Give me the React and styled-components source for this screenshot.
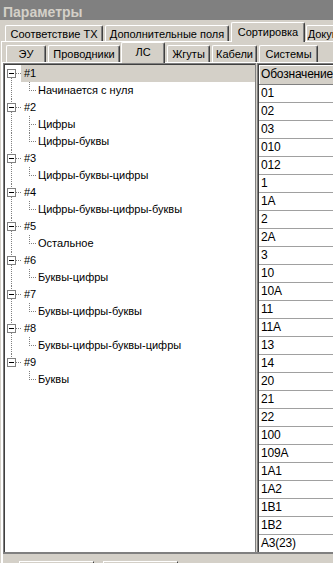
import React from 'react';
import styled, { createGlobalStyle } from 'styled-components';

const GlobalStyle = createGlobalStyle`
  html, body { margin: 0; padding: 0; background: #d4d0c8; }
  body { font-family: "Liberation Sans", Arial, sans-serif; font-size: 11px; color: #000; }
  #root { width: 333px; height: 563px; overflow: hidden; }
`;

const Window = styled.div`
  width: 333px;
  height: 563px;
  overflow: hidden;
  background: #d4d0c8;
  display: flex;
  flex-direction: column;
`;

const TitleBar = styled.div`
  flex: none;
  height: 20px;
  background: #808080;
  color: #d4d0c8;
  font-weight: bold;
  font-size: 14px;
  line-height: 24px;
  padding-left: 3px;
  white-space: nowrap;
  overflow: hidden;
`;

const TabRow = styled.div`
  flex: none;
  height: ${p => p.$h}px;
  display: flex;
  align-items: flex-end;
  padding-left: ${p => p.$pl}px;
  position: relative;
  z-index: 2;
`;

const Tab = styled.div`
  flex: none;
  box-sizing: border-box;
  width: ${p => p.$w}px;
  margin-left: ${p => p.$ml}px;
  height: ${p => (p.$active ? p.$ah : p.$h)}px;
  margin-bottom: ${p => (p.$active ? -1 : 0)}px;
  padding-bottom: ${p => (p.$active ? 2 : 0)}px;
  background: #d4d0c8;
  border-top: 1px solid #fff;
  border-left: 1px solid #fff;
  border-right: 1px solid #404040;
  border-radius: 2px 2px 0 0;
  box-shadow: inset -1px 0 0 #808080;
  display: flex;
  align-items: center;
  justify-content: center;
  white-space: nowrap;
  overflow: hidden;
  font-size: 11px;
`;

const OuterPage = styled.div`
  flex: 1;
  min-height: 0;
  margin-left: 1px;
  border-top: 1px solid #fff;
  border-left: 1px solid #fff;
  display: flex;
  flex-direction: column;
`;

const InnerPage = styled.div`
  flex: 1;
  min-height: 0;
  border-top: 1px solid #fff;
  border-left: 1px solid #fff;
  display: flex;
  flex-direction: column;
`;

const Panels = styled.div`
  flex: none;
  height: 489px;
  display: flex;
`;

const Tree = styled.div`
  flex: none;
  box-sizing: border-box;
  width: 253px;
  background: #fff;
  border-top: 1px solid #808080;
  border-left: 1px solid #808080;
  border-right: 1px solid #808080;
  padding: 1px 0 0 1px;
  box-shadow: inset 1px 1px 0 #404040;
  display: flex;
  flex-direction: column;
  overflow: hidden;
`;

const TreeRow = styled.div`
  flex: none;
  height: 17px;
  display: flex;
  align-items: stretch;
`;

const Guide = styled.svg`
  flex: none;
  display: block;
`;

const NodeLabel = styled.div`
  flex: 1;
  padding-left: ${p => p.$pl}px;
  line-height: 17px;
  font-size: 11px;
  white-space: nowrap;
  background: ${p => (p.$selected ? '#d4d0c8' : 'transparent')};
`;

const Grid = styled.div`
  flex: 1;
  min-width: 0;
  margin-left: 1px;
  background: #fff;
  border-top: 1px solid #808080;
  border-left: 1px solid #808080;
  padding: 1px 0 0 1px;
  box-shadow: inset 1px 1px 0 #404040;
  display: flex;
  flex-direction: column;
  overflow: hidden;
`;

const HeaderCell = styled.div`
  flex: none;
  box-sizing: border-box;
  height: 20px;
  background: #d4d0c8;
  border-bottom: 1px solid #808080;
  box-shadow: inset 1px 1px 0 #fff;
  padding-left: 2px;
  line-height: 19px;
  font-size: 12px;
  letter-spacing: -0.2px;
  white-space: nowrap;
`;

const Cell = styled.div`
  flex: none;
  box-sizing: border-box;
  height: 18px;
  border-bottom: 1px solid #a0a0a0;
  padding-left: 2px;
  line-height: 17px;
  font-size: 12px;
  letter-spacing: -0.2px;
  white-space: nowrap;
`;

const BottomEdge = styled.div`
  flex: none;
  height: 2px;
  background: #808080;
`;

const BottomBar = styled.div`
  flex: 1;
  display: flex;
  gap: 9px;
  padding: 7px 0 0 16px;
`;

const StubButton = styled.div`
  flex: none;
  box-sizing: border-box;
  width: 75px;
  height: 12px;
  border-top: 1px solid #fff;
  border-left: 1px solid #fff;
  border-right: 1px solid #404040;
`;

const outerTabs = [
  { label: 'Соответствие ТХ', w: 98, ml: 0 },
  { label: 'Дополнительные поля', w: 124, ml: 2 },
  { label: 'Сортировка', w: 74, ml: 2, active: true },
  { label: 'Документы', w: 60, ml: 1 },
];

const innerTabs = [
  { label: 'ЭУ', w: 40, ml: 0 },
  { label: 'Проводники', w: 72, ml: 2 },
  { label: 'ЛС', w: 44, ml: 1, active: true },
  { label: 'Жгуты', w: 43, ml: 2 },
  { label: 'Кабели', w: 45, ml: 2 },
  { label: 'Системы', w: 59, ml: 2 },
];

const tree = [
  { label: '#1', children: ['Начинается с нуля'] },
  { label: '#2', children: ['Цифры', 'Цифры-буквы'] },
  { label: '#3', children: ['Цифры-буквы-цифры'] },
  { label: '#4', children: ['Цифры-буквы-цифры-буквы'] },
  { label: '#5', children: ['Остальное'] },
  { label: '#6', children: ['Буквы-цифры'] },
  { label: '#7', children: ['Буквы-цифры-буквы'] },
  { label: '#8', children: ['Буквы-цифры-буквы-цифры'] },
  { label: '#9', children: ['Буквы'] },
];

const gridRows = [
  '01', '02', '03', '010', '012', '1', '1A', '2', '2A', '3', '10', '10A', '11',
  '11A', '13', '14', '20', '21', '22', '100', '109A', '1A1', '1A2', '1B1', '1B2', 'A3(23)',
];

const dot = {
  stroke: '#808080',
  strokeWidth: 1,
  strokeDasharray: '1 1',
  shapeRendering: 'crispEdges',
};

function ParentGuide({ first, last }) {
  return (
    <Guide width={16} height={17} viewBox="0 0 16 17">
      {!first && <line x1={6.5} y1={0} x2={6.5} y2={4} {...dot} />}
      {!last && <line x1={6.5} y1={13} x2={6.5} y2={17} {...dot} />}
      <line x1={11} y1={8.5} x2={16} y2={8.5} {...dot} />
      <rect x={2.5} y={4.5} width={8} height={8} fill="#fff" stroke="#808080" shapeRendering="crispEdges" />
      <line x1={4} y1={8.5} x2={9} y2={8.5} stroke="#000" shapeRendering="crispEdges" />
    </Guide>
  );
}

function ChildGuide({ parentLast, lastChild }) {
  return (
    <Guide width={31} height={17} viewBox="0 0 31 17">
      {!parentLast && <line x1={6.5} y1={0} x2={6.5} y2={17} {...dot} />}
      <line x1={24.5} y1={0} x2={24.5} y2={lastChild ? 9 : 17} {...dot} />
      <line x1={26} y1={8.5} x2={31} y2={8.5} {...dot} />
    </Guide>
  );
}

export default function App() {
  const rows = [];
  tree.forEach((node, i) => {
    const first = i === 0;
    const last = i === tree.length - 1;
    rows.push(
      <TreeRow key={node.label}>
        <ParentGuide first={first} last={last} />
        <NodeLabel $pl={3} $selected={first}>{node.label}</NodeLabel>
      </TreeRow>
    );
    node.children.forEach((c, j) => {
      rows.push(
        <TreeRow key={node.label + c}>
          <ChildGuide parentLast={last} lastChild={j === node.children.length - 1} />
          <NodeLabel $pl={2}>{c}</NodeLabel>
        </TreeRow>
      );
    });
  });

  return (
    <>
      <GlobalStyle />
      <Window>
        <TitleBar>Параметры</TitleBar>
        <TabRow $h={21} $pl={5}>
          {outerTabs.map(t => (
            <Tab key={t.label} $w={t.w} $ml={t.ml} $h={16} $ah={20} $active={t.active}>
              {t.label}
            </Tab>
          ))}
        </TabRow>
        <OuterPage>
          <TabRow $h={20} $pl={4}>
            {innerTabs.map(t => (
              <Tab key={t.label} $w={t.w} $ml={t.ml} $h={17} $ah={21} $active={t.active}>
                {t.label}
              </Tab>
            ))}
          </TabRow>
          <InnerPage>
            <Panels>
              <Tree>{rows}</Tree>
              <Grid>
                <HeaderCell>Обозначение</HeaderCell>
                {gridRows.map(r => (
                  <Cell key={r}>{r}</Cell>
                ))}
              </Grid>
            </Panels>
            <BottomEdge />
            <BottomBar>
              <StubButton />
              <StubButton />
            </BottomBar>
          </InnerPage>
        </OuterPage>
      </Window>
    </>
  );
}
